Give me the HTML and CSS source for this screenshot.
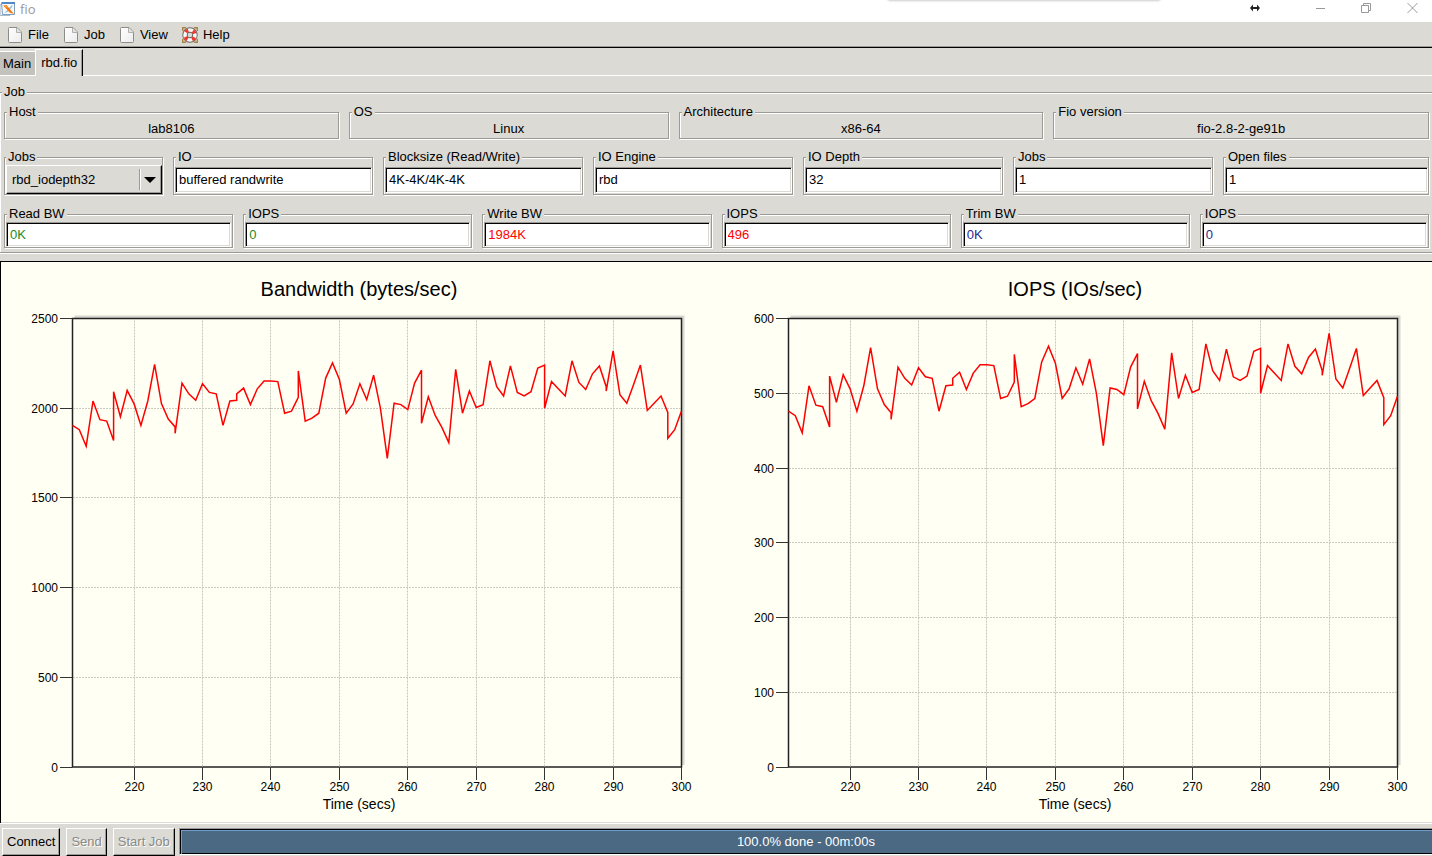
FILE: index.html
```html
<!DOCTYPE html>
<html lang="en">
<head>
<meta charset="utf-8">
<title>fio</title>
<link rel="stylesheet" href="styles.css">
</head>
<body>
<header class="titlebar">
  <svg class="app-icon" width="16" height="16" viewBox="0 0 16 16" aria-hidden="true">
    <path d="M0 3.500H10V14.500H0z" fill="#eef3f8" stroke="#a9bccd"/>
    <path d="M1.500 1.500H14.500V13.500H2.500z" fill="#f7fafd" stroke="#7f9fbe"/>
    <path d="M2 1H15V3H2z" fill="#5289c4"/>
    <path d="M12.500 3.500L9 7 7 9.500 4 12.500 8 10.500 12 6z" fill="#8fb8df"/>
    <path d="M3 4.500L6.500 4 9 7 14 13 9.500 11.500 7 8.500z" fill="#f47a0c"/>
    <path d="M3.500 4.800L6 4.500 8 7z" fill="#fbb23c"/>
  </svg>
  <span class="app-name">fio</span>
  <span class="popup-edge"></span>
  <div class="window-controls">
    <svg class="resize-mark" width="12" height="8" viewBox="0 0 12 8" aria-hidden="true"><path d="M1 4L4 .5V3H8V.5L11 4 8 7.500V5H4V7.500z" fill="#222"/></svg>
    <button class="win-btn" aria-label="Minimize"><svg width="11" height="11" viewBox="0 0 11 11"><path d="M1 5.500H10" stroke="#999" fill="none"/></svg></button>
    <button class="win-btn" aria-label="Restore"><svg width="11" height="11" viewBox="0 0 11 11"><path d="M.5 2.500H7.500V9.500H.5zM2.500 2V.5H9.500V7.500H8" stroke="#999" fill="none"/></svg></button>
    <button class="win-btn" aria-label="Close"><svg width="11" height="11" viewBox="0 0 11 11"><path d="M.5 0L10.500 10M10.500 0L.5 10" stroke="#999" fill="none"/></svg></button>
  </div>
</header>

<svg class="defs" width="0" height="0" aria-hidden="true">
  <defs>
    <linearGradient id="paper" x1="0" y1="0" x2="1" y2="1"><stop offset="0" stop-color="#fff"/><stop offset="1" stop-color="#ececec"/></linearGradient>
    <symbol id="page" viewBox="0 0 16 16">
      <path d="M2.500 .5H10L14.500 5V14.500Q14.500 15.500 13.500 15.500H2.500Q1.500 15.500 1.500 14.500V1.500Q1.500 .5 2.500 .5z" fill="url(#paper)" stroke="#8c8c88"/>
      <path d="M9.500 1V5.500H14.500" fill="#e4e4e2" stroke="#b0b0ac"/>
    </symbol>
  </defs>
</svg>

<nav class="menubar">
  <button class="menu"><svg width="16" height="16"><use href="#page"/></svg>File</button>
  <button class="menu"><svg width="16" height="16"><use href="#page"/></svg>Job</button>
  <button class="menu"><svg width="16" height="16"><use href="#page"/></svg>View</button>
  <button class="menu"><svg width="16" height="16" viewBox="0 0 16 16">
    <path d="M.7 4V.7H4M12 .7H15.300V4M.7 12V15.300H4M15.300 12V15.300H12" fill="none" stroke="#a8853f" stroke-width="1.400"/>
    <circle cx="8" cy="8" r="5" fill="none" stroke="#6b6662" stroke-width="5.400"/>
    <circle cx="8" cy="8" r="5" fill="none" stroke="#f7f7f5" stroke-width="3.600"/>
    <circle cx="8" cy="8" r="5" fill="none" stroke="#f5322c" stroke-width="3.600" stroke-dasharray="3 4.854" stroke-dashoffset="-2.427"/>
  </svg>Help</button>
</nav>

<div class="tabs" role="tablist">
  <button class="tab" role="tab" aria-selected="false">Main</button>
  <button class="tab tab-active" role="tab" aria-selected="true">rbd.fio</button>
  <span class="tab-rest"></span>
</div>

<main class="panel">
  <fieldset class="frame job-frame">
    <legend>Job</legend>
    <div class="row row-info">
      <fieldset class="frame"><legend>Host</legend><div class="value">lab8106</div></fieldset>
      <fieldset class="frame"><legend>OS</legend><div class="value">Linux</div></fieldset>
      <fieldset class="frame"><legend>Architecture</legend><div class="value">x86-64</div></fieldset>
      <fieldset class="frame"><legend>Fio version</legend><div class="value">fio-2.8-2-ge91b</div></fieldset>
    </div>
    <div class="row row-job">
      <fieldset class="frame frame-select"><legend><label for="job">Jobs</label></legend>
        <div class="combo"><select id="job"><option>rbd_iodepth32</option></select><span class="combo-arrow"></span></div>
      </fieldset>
      <fieldset class="frame"><legend><label for="io">IO</label></legend><input id="io" value="buffered randwrite"></fieldset>
      <fieldset class="frame"><legend><label for="bs">Blocksize (Read/Write)</label></legend><input id="bs" value="4K-4K/4K-4K"></fieldset>
      <fieldset class="frame"><legend><label for="engine">IO Engine</label></legend><input id="engine" value="rbd"></fieldset>
      <fieldset class="frame"><legend><label for="depth">IO Depth</label></legend><input id="depth" value="32"></fieldset>
      <fieldset class="frame"><legend><label for="jobs">Jobs</label></legend><input id="jobs" value="1"></fieldset>
      <fieldset class="frame"><legend><label for="files">Open files</label></legend><input id="files" value="1"></fieldset>
    </div>
    <div class="row row-rates">
      <fieldset class="frame"><legend><label for="rbw">Read BW</label></legend><input class="read" id="rbw" value="0K"></fieldset>
      <fieldset class="frame"><legend><label for="riops">IOPS</label></legend><input class="read" id="riops" value="0"></fieldset>
      <fieldset class="frame"><legend><label for="wbw">Write BW</label></legend><input class="write" id="wbw" value="1984K"></fieldset>
      <fieldset class="frame"><legend><label for="wiops">IOPS</label></legend><input class="write" id="wiops" value="496"></fieldset>
      <fieldset class="frame"><legend><label for="tbw">Trim BW</label></legend><input class="trim" id="tbw" value="0K"></fieldset>
      <fieldset class="frame"><legend><label for="tiops">IOPS</label></legend><input class="trim" id="tiops" value="0"></fieldset>
    </div>
  </fieldset>
</main>

<section class="charts">
  <svg class="chart" id="bandwidth" viewBox="0 0 716 562"></svg>
  <svg class="chart" id="iops" viewBox="0 0 716 562"></svg>
</section>

<footer class="actions">
  <button class="btn">Connect</button>
  <button class="btn" disabled>Send</button>
  <button class="btn" disabled>Start Job</button>
  <div class="progress" role="progressbar" aria-valuenow="100" aria-valuemin="0" aria-valuemax="100">100.0% done - 00m:00s</div>
</footer>
<script src="charts.js"></script>
</body>
</html>
```

FILE: styles.css
```css
* { box-sizing: border-box; }

body {
  margin: 0;
  min-height: 100vh;
  display: flex;
  flex-direction: column;
  overflow: hidden;
  background: #dbdad5;
  color: #000;
  font: 13px/15px "Liberation Sans", Arial, sans-serif;
}

button, input, select { font: inherit; color: inherit; border-radius: 0; }
button { background: none; border: 0; padding: 0; margin: 0; }
.defs { position: absolute; }

/* title bar */
.titlebar {
  position: relative;
  display: flex;
  align-items: center;
  height: 22px;
  padding: 0 14px 4px 0;
  background: #fff;
}
.app-name { margin-left: 4px; color: #999; font: 13px/18px "Open Sans", sans-serif; }
.popup-edge {
  position: absolute;
  top: -4px;
  left: 62%;
  width: 19%;
  height: 4px;
  box-shadow: 0 0 3px #999;
}
.window-controls { display: flex; align-items: center; margin-left: auto; padding-bottom: 2px; }
.resize-mark { margin-right: 54px; }
.win-btn { display: flex; margin-left: 35px; }
.resize-mark + .win-btn { margin-left: 0; }

/* menu bar */
.menubar {
  display: flex;
  gap: 14px;
  height: 26px;
  padding-left: 7px;
  border-bottom: 1px solid #000;
  box-shadow: inset 0 -1px #9c9a94;
}
.menu { display: flex; align-items: center; gap: 5px; }

/* tabs */
.tabs { display: flex; align-items: flex-end; height: 28px; }
.tab {
  height: 25px;
  padding: 0 4px 0 3px;
  background: #c3c2bd;
  border-top: 1px solid #fff;
  border-bottom: 1px solid #fff;
}
.tab-active {
  height: 27px;
  padding: 0 5px 2px;
  background: #dbdad5;
  border-left: 1px solid #fff;
  border-right: 1px solid #000;
  border-bottom: 0;
  box-shadow: inset -1px 0 #9c9a94;
}
.tab-rest { flex: 1; border-bottom: 1px solid #fff; }

/* etched frames */
.frame {
  min-width: 0;
  margin: 0;
  padding: 0 1px;
  border: 1px solid #9c9a94;
  box-shadow: 1px 1px #fff, inset 1px 1px #fff;
}
.frame > legend { height: 15px; margin-left: 1px; padding: 0 2px; background: #dbdad5; line-height: 13px; }
.panel { padding: 9px 0 8px; }
.job-frame { margin: 0 -1px; padding: 5px 3px 4px 4px; }
.job-frame > legend { margin-left: -2px; }
.row { display: grid; gap: 10px; }
.row-info { grid-template-columns: 335fr 320fr 365fr 376fr; }
.row-job { grid-template-columns: 159fr repeat(5, 200fr) 206fr; margin-top: 11px; }
.row-rates { grid-template-columns: repeat(6, 1fr); margin-top: 12px; }
.value { line-height: 18px; text-align: center; }
.row-job .frame { padding: 2px 0 1px 1px; }
.row-job .frame-select { padding: 0; }

input {
  display: block;
  width: 100%;
  height: 26px;
  padding: 0 3px 2px;
  background: #fff;
  border: 1px solid;
  border-color: #9c9a94 #fff #fff #9c9a94;
  box-shadow: inset 1px 1px #000, inset -1px -1px #dbdad5;
}
.row-rates input { height: 25px; padding-bottom: 0; }
.read { color: #228b22; }
.write { color: #f00; }
.trim { color: #2b2b8c; }

.combo { position: relative; padding-left: 1px; }
select {
  appearance: none;
  display: block;
  width: 100%;
  height: 29px;
  padding: 0 24px 0 5px;
  background: #dbdad5;
  border: 1px solid;
  border-color: #fff #000 #000 #fff;
  box-shadow: inset -1px -1px #9c9a94;
}
.combo-arrow {
  position: absolute;
  top: 4px;
  right: 6px;
  width: 17px;
  height: 21px;
  border-left: 1px solid #9c9a94;
  box-shadow: inset 1px 0 #fff;
  pointer-events: none;
}
.combo-arrow::after {
  content: "";
  position: absolute;
  top: 8px;
  right: 0;
  border: solid transparent;
  border-width: 6px 6px 0;
  border-top-color: #000;
}

/* charts */
.charts {
  flex: 1;
  display: flex;
  background: #fffff3;
  box-shadow: inset 1px 1px #000, inset 0 -1px #dbdad5;
}
.chart { flex: 1; min-width: 0; font-family: "Liberation Sans", Arial, sans-serif; }
.chart-title { font-size: 20px; text-anchor: middle; }
.axis-title { font-size: 14px; text-anchor: middle; }
.tick-label { font-size: 12px; text-anchor: middle; }
.tick-label-y { text-anchor: end; }
.shade { fill: #d8d6d0; }
.plot { fill: #fffff3; stroke: #222; stroke-width: 1.5; }
.tick { stroke: #333; }
.grid-x { stroke: #c6c6bc; stroke-dasharray: 2 1; }
.grid-y { stroke: #9a9990; stroke-dasharray: 1 2; }
.series { fill: none; stroke: #f00; stroke-width: 1.5; }

/* bottom bar */
.actions {
  display: flex;
  gap: 6px;
  height: 33px;
  padding: 4px 0 0 2px;
  border-top: 1px solid #fff;
}
.btn {
  height: 28px;
  padding: 0 4px 2px;
  border: 1px solid;
  border-color: #fff #000 #000 #fff;
  box-shadow: inset -1px -1px #9c9a94;
}
.btn:disabled { color: #8a8984; text-shadow: 1px 1px #fff; }
.progress {
  flex: 1;
  height: 27px;
  margin-left: -2px;
  color: #fff;
  line-height: 26px;
  text-align: center;
  background: #4b6983;
  border: 1px solid;
  border-color: #9c9a94 transparent #fff #9c9a94;
  border-right: 0;
  box-shadow: inset 1px 1px #000, inset 2px 2px #6f9dc9, inset 0 -1px #000;
}
```

FILE: charts.js
```js
// [seconds, IOPS] samples; the bandwidth in KB/s is four times the IOPS.
const samples = [
  [211,476],[212,470],[213,447],[214,510],[215,484],[216,482],[217,455],[217,523],[218,488],[219,525],
  [220,506],[221,476],[222,510],[223,561],[224,506],[225,485],[226,474],[226,465],[227,535],[228,520],
  [229,511],[230,534],[231,522],[232,520],[233,476],[234,510],[235,511],[235,520],[236,528],[237,505],
  [238,527],[239,538],[240,538],[241,537],[242,493],[243,496],[244,515],[244,552],[245,482],[246,486],
  [247,493],[248,542],[249,563],[250,540],[251,493],[252,506],[253,534],[254,512],[255,546],[256,500],
  [257,430],[258,507],[259,505],[260,498],[261,535],[262,553],[262,479],[263,516],[264,490],[265,473],
  [266,452],[267,554],[268,493],[269,524],[270,501],[271,505],[272,566],[273,530],[274,517],[275,559],
  [276,522],[277,517],[278,523],[279,556],[280,560],[280,500],[281,537],[282,527],[283,517],[284,566],
  [285,536],[286,526],[287,548],[288,559],[289,530],[289,524],[290,580],[291,519],[292,507],[293,533],
  [294,560],[295,497],[296,507],[297,517],[298,494],[298,458],[299,470],[300,496]
];

const plot = { left: 72.5, right: 681.5, top: 57.5, bottom: 506 };
const timeRange = [211, 300];

function add(svg, name, className, attributes, text) {
  const node = document.createElementNS("http://www.w3.org/2000/svg", name);
  node.setAttribute("class", className);
  for (const key in attributes) node.setAttribute(key, attributes[key]);
  if (text !== undefined) node.textContent = text;
  svg.appendChild(node);
}

function drawChart(id, title, max, step, scale) {
  const svg = document.getElementById(id);
  const width = plot.right - plot.left;
  const height = plot.bottom - plot.top;
  const toX = t => plot.left + (t - timeRange[0]) / (timeRange[1] - timeRange[0]) * width;
  const toY = v => plot.bottom - v / max * height;
  const snap = n => Math.floor(n) + 0.5;

  add(svg, "text", "chart-title", { x: 359, y: 35 }, title);
  add(svg, "rect", "shade", { x: plot.left + 2, y: plot.top - 3, width: width + 1, height: height + 1 });
  add(svg, "rect", "plot", { x: plot.left, y: plot.top, width, height });

  for (let v = 0; v <= max; v += step) {
    const y = snap(toY(v));
    add(svg, "line", "tick", { x1: 60, x2: plot.left, y1: y, y2: y });
    if (v > 0 && v < max) add(svg, "line", "grid-y", { x1: plot.left + 1, x2: plot.right, y1: y, y2: y });
    add(svg, "text", "tick-label tick-label-y", { x: 58, y: y + 4 }, v);
  }
  for (let t = 220; t <= timeRange[1]; t += 10) {
    const x = snap(toX(t));
    add(svg, "line", "tick", { x1: x, x2: x, y1: plot.bottom, y2: plot.bottom + 13 });
    if (t < timeRange[1]) add(svg, "line", "grid-x", { x1: x, x2: x, y1: plot.top + 2, y2: plot.bottom });
    add(svg, "text", "tick-label", { x, y: 530 }, t);
  }
  add(svg, "text", "axis-title", { x: 359, y: 548 }, "Time (secs)");

  const points = samples.map(([t, n]) => toX(t).toFixed(1) + "," + toY(n * scale).toFixed(1)).join(" ");
  add(svg, "polyline", "series", { points });
}

drawChart("bandwidth", "Bandwidth (bytes/sec)", 2500, 500, 4);
drawChart("iops", "IOPS (IOs/sec)", 600, 100, 1);
```
